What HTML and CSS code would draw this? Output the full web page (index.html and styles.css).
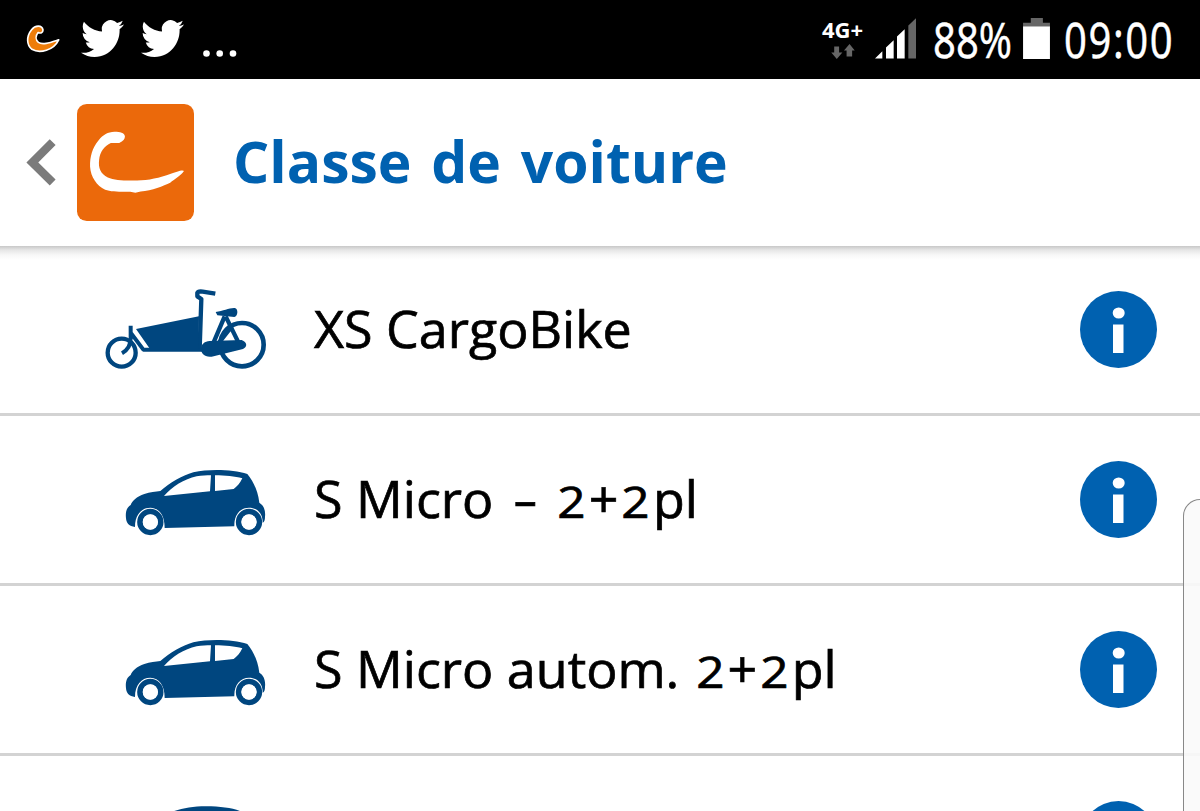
FILE: index.html
```html
<!DOCTYPE html>
<html lang="fr">
<head>
    <meta charset="UTF-8">
    <meta name="viewport" content="width=device-width, initial-scale=1.0">
    <title>Classe de voiture</title>
    <link rel="stylesheet" href="styles.css">
</head>
<body>
    <svg class="defs" width="0" height="0">
        <symbol id="bird" viewBox="0 2.2 24 19.6" preserveAspectRatio="none">
            <path d="M23.953 4.57a10 10 0 01-2.825.775 4.958 4.958 0 002.163-2.723c-.951.555-2.005.959-3.127 1.184a4.92 4.92 0 00-8.384 4.482C7.69 8.095 4.067 6.13 1.64 3.162a4.822 4.822 0 00-.666 2.475c0 1.71.87 3.213 2.188 4.096a4.904 4.904 0 01-2.228-.616v.06a4.923 4.923 0 003.946 4.827 4.996 4.996 0 01-2.212.085 4.936 4.936 0 004.604 3.417 9.867 9.867 0 01-6.102 2.105c-.39 0-.779-.023-1.17-.067a13.995 13.995 0 007.557 2.209c9.053 0 13.998-7.496 13.998-13.985 0-.21 0-.42-.015-.63A9.935 9.935 0 0024 4.59z"/>
        </symbol>
        <symbol id="car" viewBox="-60 -30 600 330">
            <path fill="#00467f" d="M75 216 C58 214 49 205 48 190 C46 173 49 158 62 150 C66 138 80 125 103 117 C120 111 137 110 151 108 C180 84 215 62 250 52 C300 41 370 44 412 57 C429 78 443 104 448 143 C462 151 467 168 465 185 C465 195 463 201 458 203 C459 174 440 158 417 158 C391 158 372 179 373 214 L164 219 C164 181 148 159 121 158 C94 158 75 180 75 216 Z"/>
            <path fill="#fff" d="M162 123 C187 94 222 73 260 64 C275 61 290 61 303 61 L300 109 Z M315 61 C345 61 375 64 397 70 C390 85 380 96 371 102 L315 108 Z"/>
            <circle cx="121" cy="201" r="31" fill="none" stroke="#00467f" stroke-width="17"/>
            <circle cx="417" cy="201" r="31" fill="none" stroke="#00467f" stroke-width="17"/>
            <circle cx="121" cy="201" r="23" fill="#fff"/>
            <circle cx="417" cy="201" r="23" fill="#fff"/>
        </symbol>
        <symbol id="info" viewBox="0 0 77 77">
            <circle cx="38.500" cy="38.500" r="38.500" fill="#0061b0"/>
            <ellipse cx="38.700" cy="22" rx="6" ry="5.500" fill="#fff"/>
            <path fill="#fff" d="M33 33.500h10.500v28.500H33z"/>
        </symbol>
    </svg>

    <div class="status-bar">
        <div class="notifications">
            <svg class="mini-logo" viewBox="0 0 110 100">
                <path d="M55 24 C52 8 31 9 20 23 C3 44 5 71 21 83 C45 97 88 86 103 54 C78 62 54 71 41 62 C32 54 32 42 40 32 C48 35 55 32 55 24 Z" fill="#ee7d0a" stroke="#fff" stroke-width="5" stroke-linejoin="round"/>
            </svg>
            <svg class="bird"><use href="#bird"/></svg>
            <svg class="bird"><use href="#bird"/></svg>
            <svg class="dots" viewBox="0 0 34 7"><circle cx="3.500" cy="3.500" r="3.300"/><circle cx="16.700" cy="3.500" r="3.300"/><circle cx="30" cy="3.500" r="3.300"/></svg>
        </div>
        <div class="system">
            <div class="network">
                <span class="network-type">4G+</span>
                <svg class="arrows" viewBox="0 0 72 46"><path d="M9 8h15v18h10L17 46 0 26h9zM47 38V20H39L56 0l16 20H64v18z"/></svg>
            </div>
            <svg class="signal" viewBox="0 0 123 122">
                <path fill="#fff" d="M0 121l22-22v22zM33 88l23-22v55H33zM66 55l23-22v88H66z"/>
                <path fill="#666" d="M100 22L123 0v121h-23z"/>
            </svg>
            <span class="percent"><span>88%</span></span>
            <svg class="battery" viewBox="0 0 80 122">
                <path fill="#666" d="M0 14h23V0h36v14h21v12H0z"/>
                <path fill="#fff" d="M0 25h80v97H0z"/>
            </svg>
            <span class="clock"><span>09:00</span></span>
        </div>
    </div>

    <div class="header">
        <svg class="back" viewBox="0 0 90 140"><path d="M80 9L19 70l61 60" fill="none" stroke="#7b7b7b" stroke-width="25"/></svg>
        <svg class="logo" viewBox="0 0 349 349">
            <rect width="349" height="349" rx="29" fill="#eb690b"/>
            <path fill="#fff" d="M126 116 C138 111 143 104 143 96 C141 86 129 83 112 83 C91 84 79 91 64 109 C46 131 38 157 39 187 C41 218 59 243 84 256 C102 263 134 262 159 262 L174 265 L190 261 C224 259 258 244 278 235 C291 224 312 212 319 200 C316 194 294 204 280 208 C246 220 214 228 179 228 C145 229 112 228 92 219 C70 208 63 190 66 166 C68 143 82 124 101 116 Z"/>
        </svg>
        <h1>Classe de voiture</h1>
    </div>

    <div class="list">
        <div class="row">
            <svg class="vehicle" viewBox="0 0 600 330">
                <g fill="none" stroke="#00467f">
                    <circle cx="95" cy="233" r="42" stroke-width="13"/>
                    <circle cx="456" cy="209" r="65" stroke-width="14"/>
                    <path d="M122 152V190C122 212 112 226 96 235M122 173L160 224H340" stroke-width="12" stroke-linejoin="round"/>
                    <path d="M329 220L334 72L322 64V54Q324 48 338 50L376 56" stroke-width="13" stroke-linejoin="round"/>
                    <path d="M404 124L368 209M407 124L450 212M384 207L422 158" stroke-width="13"/>
                </g>
                <path fill="#00467f" d="M138 162L327 124L325 222H180ZM377 111C400 108 418 98 434 99C446 101 444 124 433 126L382 121ZM359 198L455 195C472 201 473 216 459 222L365 245C345 248 332 235 333 220C334 207 344 199 359 198Z"/>
            </svg>
            <span class="label">XS CargoBike</span>
            <svg class="info"><use href="#info"/></svg>
        </div>
        <div class="row">
            <svg class="vehicle"><use href="#car"/></svg>
            <span class="label">S Micro <span class="dash">-</span> <span class="num">2</span>+<span class="num">2</span>pl</span>
            <svg class="info"><use href="#info"/></svg>
        </div>
        <div class="row">
            <svg class="vehicle"><use href="#car"/></svg>
            <span class="label">S Micro autom. <span class="num">2</span>+<span class="num">2</span>pl</span>
            <svg class="info"><use href="#info"/></svg>
        </div>
        <div class="row">
            <svg class="vehicle" viewBox="0 0 600 330"><path fill="#00467f" d="M130 145C190 105 245 64 348 64C450 64 500 90 520 150V250H70V180Z"/></svg>
            <span class="label"></span>
            <svg class="info"><use href="#info"/></svg>
        </div>
    </div>

    <div class="side-panel"></div>
</body>
</html>
```

FILE: styles.css
```css
* {
    box-sizing: border-box;
}

body {
    margin: 0;
    height: 811px;
    overflow: hidden;
    position: relative;
    background: #fff;
    color: #000;
    font-family: "Open Sans", "Noto Sans", sans-serif;
}

svg {
    display: block;
    flex-shrink: 0;
}

.defs {
    position: absolute;
}

.status-bar {
    display: flex;
    justify-content: space-between;
    height: 79px;
    padding: 0 27px 0 25px;
    background: #000;
    color: #fff;
}

.notifications,
.system {
    display: flex;
    align-items: flex-start;
}

.mini-logo {
    width: 36px;
    height: 33px;
    margin-top: 22px;
}

.bird {
    width: 43px;
    height: 37px;
    margin: 20px 0 0 17px;
    fill: #fff;
}

.mini-logo + .bird {
    margin-left: 20px;
}

.dots {
    width: 34px;
    height: 7px;
    margin: 50px 0 0 19px;
    fill: #fff;
}

.network {
    width: 53px;
}

.network-type {
    display: block;
    margin-top: 17px;
    font-size: 22px;
    line-height: 24px;
    font-weight: 700;
}

.arrows {
    width: 24px;
    height: 15px;
    margin: 3px 0 0 9px;
    fill: #666;
}

.signal {
    width: 41px;
    height: 41px;
    margin-top: 18px;
}

.percent,
.clock {
    height: 79px;
    font-family: "Noto Sans", sans-serif;
    font-size: 50px;
    line-height: 79px;
    white-space: nowrap;
    -webkit-text-stroke: 0.4px #fff;
}

.percent {
    width: 79px;
    margin-left: 17px;
}

.clock {
    width: 109px;
    margin-left: 14px;
}

.percent span,
.clock span {
    display: inline-block;
    transform: scaleX(0.8);
    transform-origin: left;
}

.clock span {
    letter-spacing: 2px;
}

.battery {
    width: 27px;
    height: 41px;
    margin: 18px 0 0 11px;
}

.header {
    display: flex;
    align-items: center;
    height: 167px;
    padding-left: 26px;
    background: #fff;
}

.back {
    width: 30px;
    height: 47px;
}

.logo {
    width: 117px;
    height: 117px;
    margin-left: 21px;
}

.header h1 {
    margin: 0 0 3px 39px;
    color: #0061b0;
    font-size: 57px;
    line-height: 80px;
    font-weight: 700;
    word-spacing: 5px;
    white-space: nowrap;
}

.list {
    height: 565px;
    overflow: hidden;
    background: linear-gradient(#c8c8c8, #e6e6e6 4px, #f7f7f7 9px, #fff 14px);
}

.row {
    display: flex;
    align-items: center;
    height: 170px;
    padding: 0 43px 0 90px;
    border-bottom: 3px solid #d3d3d3;
}

.vehicle {
    width: 200px;
    height: 110px;
}

.label {
    flex: 1;
    margin-left: 24px;
    padding-bottom: 4px;
    font-size: 52px;
    line-height: 70px;
    white-space: nowrap;
    -webkit-text-stroke: 0.7px #000;
}

.dash {
    display: inline-block;
    margin: 0 7px 0 10px;
    line-height: 1;
    transform: scaleX(1.5);
}

.num {
    display: inline-block;
    margin: 0 5px 0 5px;
    font-size: 43px;
    line-height: 1;
    transform: scaleX(1.15);
}

.info {
    width: 77px;
    height: 77px;
}

/* edge panel sliding over the list */
.side-panel {
    position: absolute;
    top: 499px;
    left: 1183px;
    width: 17px;
    height: 312px;
    border: 1px solid #888;
    border-width: 1px 0 0 1px;
    border-top-left-radius: 17px;
    background: rgba(250, 250, 250, 0.9);
}
```
